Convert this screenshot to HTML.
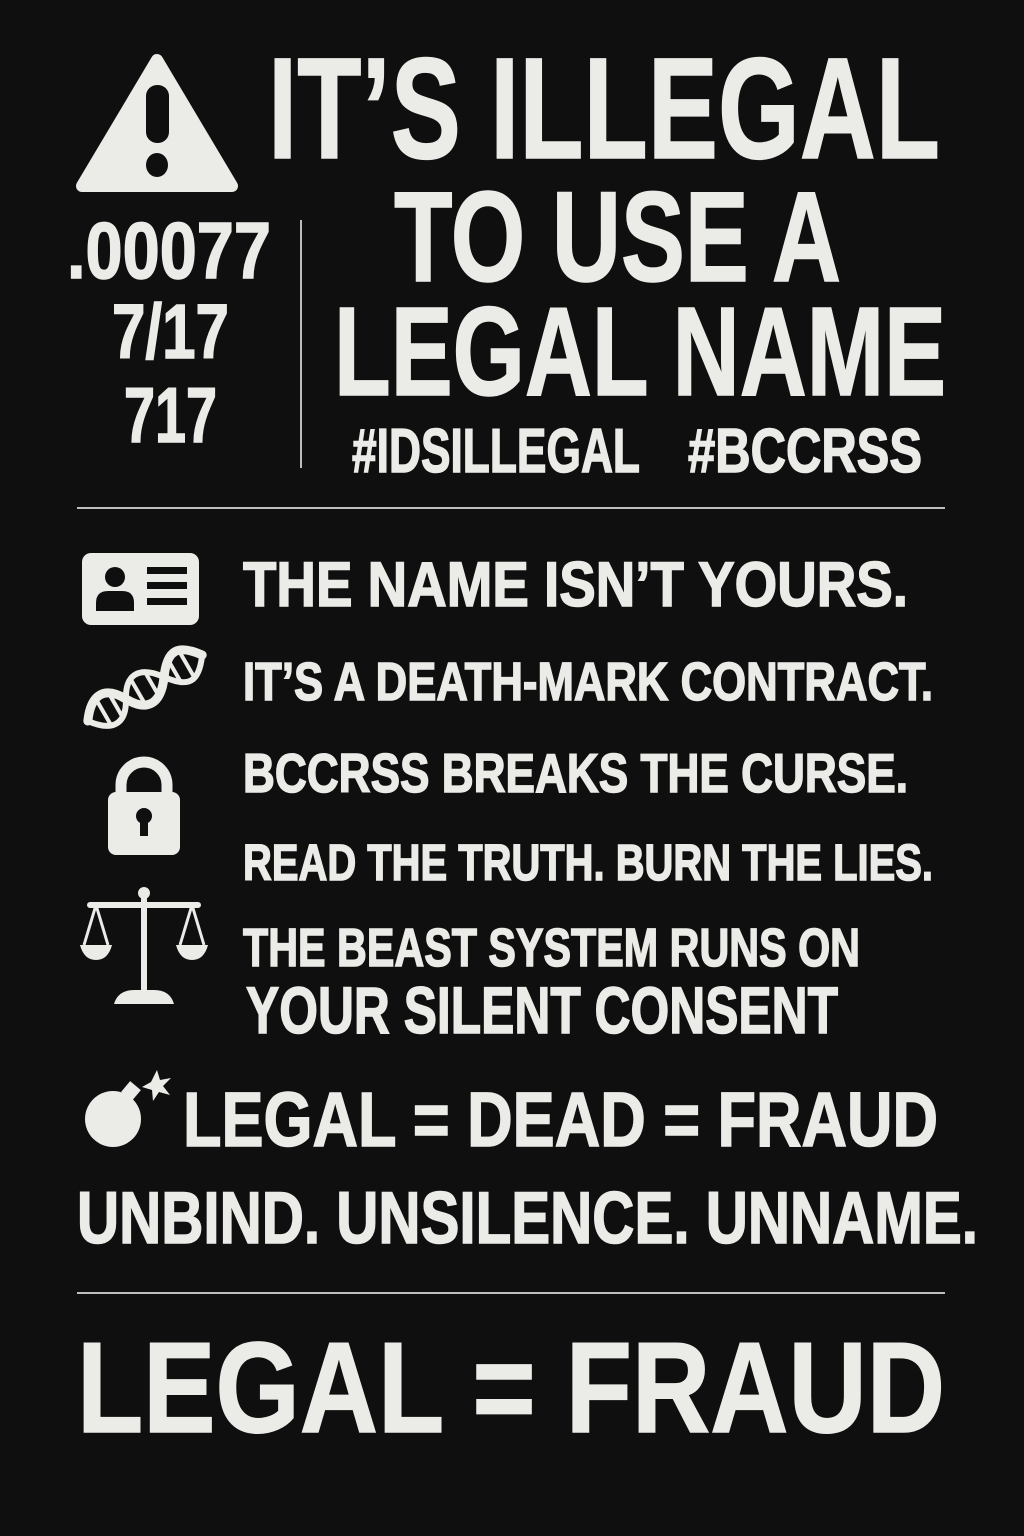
<!DOCTYPE html>
<html><head><meta charset="utf-8"><style>
html,body{margin:0;padding:0;background:#0f0f0f;}
svg{display:block;}
text{font-family:"Liberation Sans",sans-serif;font-weight:bold;fill:#ebebe8;stroke:#ebebe8;stroke-width:1.5;}
</style></head><body>
<svg width="1024" height="1536" viewBox="0 0 1024 1536" xmlns="http://www.w3.org/2000/svg">
<rect width="1024" height="1536" fill="#0f0f0f"/>
<g fill="#ebebe8" stroke="#ebebe8">
<!-- warning -->
<path d="M157,60 L232,186 L82,186 Z" stroke-width="12" stroke-linejoin="round"/>
<rect x="146" y="85" width="23" height="58" rx="11" fill="#0f0f0f" stroke="none"/>
<ellipse cx="157" cy="165" rx="11" ry="12" fill="#0f0f0f" stroke="none"/>
<!-- vertical line, rules -->
<rect x="300" y="220" width="2" height="248" stroke="none" fill="#bdbdbd"/>
<rect x="77" y="507" width="868" height="2" stroke="none" fill="#bdbdbd"/>
<rect x="77" y="1292" width="868" height="2" stroke="none" fill="#bdbdbd"/>
<!-- id card -->
<rect x="82" y="553" width="117" height="72" rx="9" stroke="none"/>
<circle cx="115" cy="577" r="10" fill="#0f0f0f" stroke="none"/>
<path d="M96,611 V603 Q96,591 108,591 H122 Q134,591 134,603 V611 Z" fill="#0f0f0f" stroke="none"/>
<rect x="147" y="567" width="40" height="7" fill="#0f0f0f" stroke="none"/>
<rect x="147" y="582" width="40" height="7" fill="#0f0f0f" stroke="none"/>
<rect x="147" y="598" width="40" height="7" fill="#0f0f0f" stroke="none"/>
<!-- dna -->
<g transform="translate(145,688) rotate(-30)" fill="none" stroke-linecap="round">
<path d="M-66,0 C-50,-22 -34,-22 -22,0 S6,22 22,0 S50,-22 66,0" stroke-width="9"/>
<path d="M-66,0 C-50,22 -34,22 -22,0 S6,-22 22,0 S50,22 66,0" stroke-width="6"/>
<path d="M-48,-14 V14 M-34,-14 V14 M-8,-14 V14 M8,-14 V14 M34,-14 V14 M48,-14 V14" stroke-width="4"/>
</g>
<!-- lock -->
<path d="M121,795 V785 a23,23 0 0 1 46,0 V795" fill="none" stroke-width="11"/>
<rect x="108" y="792" width="72" height="63" rx="8" stroke="none"/>
<circle cx="144" cy="816" r="8" fill="#0f0f0f" stroke="none"/>
<rect x="140" y="816" width="8" height="20" fill="#0f0f0f" stroke="none"/>
<!-- scales -->
<circle cx="144" cy="893" r="6" stroke="none"/>
<rect x="141" y="895" width="6" height="102" stroke="none"/>
<path d="M90,905 H198" stroke-width="6" stroke-linecap="round" fill="none"/>
<path d="M96,905 L84,945 M96,905 L108,945 M192,905 L180,945 M192,905 L204,945" stroke-width="3" fill="none"/>
<path d="M80,945 H112 Q108,960 96,960 Q84,960 80,945 Z M176,945 H208 Q204,960 192,960 Q180,960 176,945 Z" stroke="none"/>
<path d="M114,1004 Q118,990 134,990 H154 Q170,990 174,1004 Z" stroke="none"/>
<!-- bomb -->
<circle cx="113" cy="1119" r="28" stroke="none"/>
<rect x="124" y="1084" width="14" height="14" transform="rotate(40 131 1091)" stroke="none"/>
<path d="M157,1070 L160,1080 L171,1078 L163,1086 L170,1095 L159,1092 L153,1101 L152,1090 L142,1087 L151,1082 Z" stroke="none"/>
</g>

<text x="268" y="158" font-size="144" textLength="672" lengthAdjust="spacingAndGlyphs">IT’S ILLEGAL</text>
<text x="394" y="281" font-size="128" textLength="447" lengthAdjust="spacingAndGlyphs">TO USE A</text>
<text x="334" y="395" font-size="126" textLength="612" lengthAdjust="spacingAndGlyphs">LEGAL NAME</text>
<text x="352" y="472" font-size="62" textLength="288" lengthAdjust="spacingAndGlyphs">#IDSILLEGAL</text>
<text x="688" y="472" font-size="62" textLength="234" lengthAdjust="spacingAndGlyphs">#BCCRSS</text>
<text x="67" y="278" font-size="80" textLength="204" lengthAdjust="spacingAndGlyphs">.00077</text>
<text x="112" y="358" font-size="77" textLength="117" lengthAdjust="spacingAndGlyphs">7/17</text>
<text x="124" y="442" font-size="78" textLength="93" lengthAdjust="spacingAndGlyphs">717</text>

<text x="243" y="606" font-size="63" textLength="665" lengthAdjust="spacingAndGlyphs">THE NAME ISN’T YOURS.</text>
<text x="243" y="700" font-size="54" textLength="690" lengthAdjust="spacingAndGlyphs">IT’S A DEATH-MARK CONTRACT.</text>
<text x="243" y="792" font-size="55" textLength="665" lengthAdjust="spacingAndGlyphs">BCCRSS BREAKS THE CURSE.</text>
<text x="243" y="880" font-size="51" textLength="690" lengthAdjust="spacingAndGlyphs">READ THE TRUTH. BURN THE LIES.</text>
<text x="243" y="966" font-size="54" textLength="617" lengthAdjust="spacingAndGlyphs">THE BEAST SYSTEM RUNS ON</text>
<text x="246" y="1033" font-size="66" textLength="592" lengthAdjust="spacingAndGlyphs">YOUR SILENT CONSENT</text>
<text x="183" y="1146" font-size="77" textLength="755" lengthAdjust="spacingAndGlyphs">LEGAL = DEAD = FRAUD</text>
<text x="77" y="1243" font-size="73" textLength="901" lengthAdjust="spacingAndGlyphs">UNBIND. UNSILENCE. UNNAME.</text>
<text x="77" y="1432" font-size="129" textLength="868" lengthAdjust="spacingAndGlyphs">LEGAL = FRAUD</text>
</svg>
</body></html>
